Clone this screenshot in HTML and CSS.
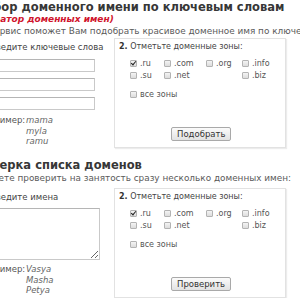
FILE: index.html
```html
<!DOCTYPE html>
<html lang="ru">
<head>
    <meta charset="UTF-8">
    <title>Подбор доменного имени</title>
    <link rel="stylesheet" href="styles.css">
</head>
<body>
<div class="page">

    <!-- Подбор по ключевым словам -->
    <div class="section">
        <h2 class="title">Подбор доменного имени по ключевым словам</h2>
        <div class="subtitle">(генератор доменных имен)</div>
        <p class="desc desc-first">Сервис поможет Вам подобрать красивое доменное имя по ключевым словам.</p>

        <form class="form">
            <div class="col-left">
                <div class="step"><b>1.</b> Введите ключевые слова</div>
                <input class="field" type="text">
                <input class="field" type="text">
                <input class="field" type="text">
                <div class="example">
                    <span class="ex-label">Пример:</span>
                    <span class="ex-words">mama<br>myla<br>ramu</span>
                </div>
            </div>
            <div class="box">
                <div class="step"><b>2.</b> Отметьте доменные зоны:</div>
                <div class="zones">
                    <span class="zone"><span class="cb checked"></span>.ru</span>
                    <span class="zone"><span class="cb"></span>.com</span>
                    <span class="zone"><span class="cb"></span>.org</span>
                    <span class="zone"><span class="cb"></span>.info</span>
                    <span class="zone"><span class="cb"></span>.su</span>
                    <span class="zone"><span class="cb"></span>.net</span>
                    <span class="zone"></span>
                    <span class="zone"><span class="cb"></span>.biz</span>
                </div>
                <div class="zone all"><span class="cb"></span>все зоны</div>
                <button class="btn" type="button">Подобрать</button>
            </div>
        </form>
    </div>

    <!-- Проверка списка -->
    <div class="section section-second">
        <h2 class="title">Проверка списка доменов</h2>
        <p class="desc">Вы можете проверить на занятость сразу несколько доменных имен:</p>

        <form class="form">
            <div class="col-left">
                <div class="step"><b>1.</b> Введите имена</div>
                <textarea class="area"></textarea>
                <div class="example example-list">
                    <span class="ex-label">Пример:</span>
                    <span class="ex-words">Vasya<br>Masha<br>Petya</span>
                </div>
            </div>
            <div class="box">
                <div class="step"><b>2.</b> Отметьте доменные зоны:</div>
                <div class="zones">
                    <span class="zone"><span class="cb checked"></span>.ru</span>
                    <span class="zone"><span class="cb"></span>.com</span>
                    <span class="zone"><span class="cb"></span>.org</span>
                    <span class="zone"><span class="cb"></span>.info</span>
                    <span class="zone"><span class="cb"></span>.su</span>
                    <span class="zone"><span class="cb"></span>.net</span>
                    <span class="zone"></span>
                    <span class="zone"><span class="cb"></span>.biz</span>
                </div>
                <div class="zone all"><span class="cb"></span>все зоны</div>
                <button class="btn" type="button">Проверить</button>
            </div>
        </form>
    </div>

</div>
</body>
</html>
```

FILE: styles.css
```css
body {
    margin: 0;
    background: #fff;
    font-family: 'DejaVu Sans', Verdana, sans-serif;
    font-size: 8.5px;
    color: #555;
    overflow: hidden;
}

.page {
    margin-left: -33.5px;
    width: 440px;
}

.title {
    margin: 0;
    padding-top: 1px;
    font-size: 11.5px;
    line-height: 13px;
    font-weight: bold;
    color: #373737;
    white-space: nowrap;
}

.subtitle {
    font-size: 9px;
    font-weight: bold;
    font-style: italic;
    color: #d0142c;
    line-height: 10px;
}

.desc {
    margin: 2px 0 0;
    font-size: 8.9px;
    line-height: 10px;
    color: #5a5a5a;
    white-space: nowrap;
}

.desc-first {
    margin-left: 21.5px;
}

.form {
    display: flex;
    margin: 2px 0 0 11.5px;
}

.col-left {
    width: 136px;
    padding-top: 4px;
}

.step {
    font-size: 8px;
    line-height: 10px;
    color: #444;
    white-space: nowrap;
}

.step b {
    color: #333;
}

.col-left .step {
    margin-bottom: 7px;
    font-size: 8.5px;
}

.field {
    display: block;
    box-sizing: border-box;
    width: 117px;
    height: 13px;
    margin: 0 0 6px;
    padding: 0;
    border: 1px solid #c9c9c9;
    border-top-color: #b5b5b5;
    background: #fff;
}

.area {
    display: block;
    box-sizing: border-box;
    width: 122px;
    height: 52px;
    margin: 0;
    padding: 0;
    border: 1px solid #c9c9c9;
    border-top-color: #b5b5b5;
    background: #fff;
    resize: both;
}

.example {
    display: flex;
    margin: -1px 0 0 10px;
    line-height: 10.5px;
}

.example-list {
    margin-top: 4px;
}

.ex-label {
    width: 38px;
    color: #555;
}

.ex-words {
    font-style: italic;
    color: #666;
}

.box {
    box-sizing: border-box;
    width: 172px;
    padding: 3px 4px 6px;
    border: 1px solid #e2e2e2;
    box-shadow: 1px 1px 1px #ececec;
}

.zones {
    display: grid;
    grid-template-columns: 34px 42px 36px auto;
    margin: 5px 0 0 11px;
}

.zone {
    display: flex;
    align-items: center;
    height: 12px;
    font-size: 8px;
    color: #555;
}

.all {
    margin: 8px 0 0 11px;
    height: 10px;
}

.cb {
    box-sizing: border-box;
    width: 7px;
    height: 7px;
    margin-right: 3px;
    border: 1px solid #b3b3b3;
    border-radius: 1px;
    background: linear-gradient(#f4f4f4, #dcdcdc);
}

.cb.checked {
    position: relative;
}

.cb.checked::after {
    content: "";
    position: absolute;
    left: 1px;
    top: -1px;
    width: 2px;
    height: 4px;
    border: solid #222;
    border-width: 0 1.5px 1.5px 0;
    transform: rotate(40deg);
}

.btn {
    display: block;
    box-sizing: border-box;
    height: 14px;
    margin: 28px 0 0 52px;
    padding: 0 5px;
    font-family: 'DejaVu Sans', Verdana, sans-serif;
    font-size: 8.5px;
    line-height: 12px;
    color: #333;
    border: 1px solid #a9a9a9;
    border-radius: 2px;
    background: linear-gradient(#fbfbfb, #e2e2e2);
}

.section-second {
    margin-top: 10px;
}

.section-second .desc {
    margin: 1px 0 0 -4px;
}

.section-second .form {
    margin-top: 5px;
}

.section-second .col-left .step {
    margin-bottom: 6px;
}
```
